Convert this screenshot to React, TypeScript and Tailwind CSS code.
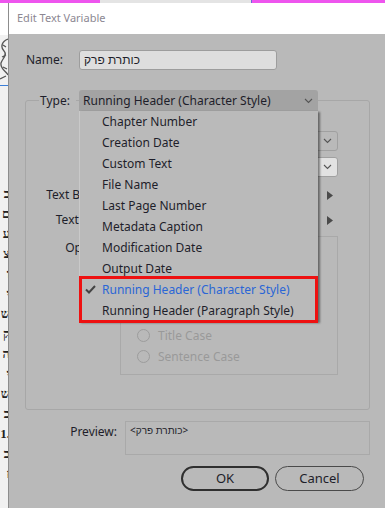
const items = [
  'Chapter Number',
  'Creation Date',
  'Custom Text',
  'File Name',
  'Last Page Number',
  'Metadata Caption',
  'Modification Date',
  'Output Date',
  'Running Header (Character Style)',
  'Running Header (Paragraph Style)',
]

const stripLetters = ['ב', 'ם', 'ע', 'צ', 'ו', 'י', 'ש', 'ק', 'ה', 'י', 'ש', 'כ', '1.', 'ב', 'ז']

function Chevron() {
  return (
    <svg width="9" height="6" viewBox="0 0 9 6" className="shrink-0">
      <polyline points="1,1 4.5,4.5 8,1" fill="none" stroke="#555" strokeWidth="1.1" />
    </svg>
  )
}

function Triangle() {
  return (
    <svg width="6" height="9" viewBox="0 0 6 9" className="shrink-0">
      <polygon points="0,0 6,4.5 0,9" fill="#4a4a4a" />
    </svg>
  )
}

function Radio({ label }: { label: string }) {
  return (
    <div className="flex h-[21px] items-center gap-[8px] pl-[16px]">
      <span className="h-[13px] w-[13px] rounded-full border border-[#9c9c9c]" />
      <span>{label}</span>
    </div>
  )
}

function Check({ label }: { label: string }) {
  return (
    <div className="flex h-[21px] items-center gap-[8px] pl-[16px]">
      <span className="h-[12px] w-[12px] rounded-[2px] border border-[#9c9c9c]" />
      <span>{label}</span>
    </div>
  )
}

function LeftStrip() {
  return (
    <div className="flex w-[8px] shrink-0 flex-col overflow-hidden bg-[#f1f1f1]">
      <div className="h-[32px] bg-white" />
      <svg width="8" height="50" viewBox="0 0 8 50">
        <path d="M8 4 C2 6 0 12 4 16 C8 20 2 24 1 28 C0 34 6 36 8 40 M3 10 l3 2 M2 22 l4 -2 M3 32 l4 2 M0 44 l6 -3" fill="none" stroke="#555" strokeWidth="1.3" />
      </svg>
      <div className="h-[1px] bg-[#3c7fd8]" />
      <div className="flex flex-col items-end pt-[98px] font-['Liberation_Serif',serif] text-[13px] font-bold leading-[20px] text-[#222]">
        {stripLetters.map((l, i) => (
          <span key={i} className="mr-[-2px]">{l}</span>
        ))}
      </div>
    </div>
  )
}

export default function App() {
  return (
    <div className="relative h-[508px] w-[385px] overflow-hidden bg-[#b9b9b9] font-['Noto_Sans','Noto_Sans_CJK_SC',sans-serif] text-[12px] text-[#1e1e2a]">
      <div className="flex h-full flex-col">
        <div className="flex h-[3px] shrink-0">
          <div className="w-[100px] bg-[#ee55ee]" />
          <div className="w-[151px] bg-[#e4e4e4]" />
          <div className="flex-1 border-l border-[#6b6bd8] bg-[#ee55ee]" />
        </div>
        <div className="flex flex-1">
          <LeftStrip />
          <div className="flex flex-1 flex-col border-l border-[#8d8d8d]">
            <div className="flex h-[31px] shrink-0 items-center bg-white pl-[8px] text-[11px] text-[#8c8792]">
              Edit Text Variable
            </div>

            <div className="flex-1 bg-[#b9b9b9] pl-[16px]">
              {/* name */}
              <div className="mt-[16px] flex h-[20px] items-center">
                <span className="w-[54px] pl-[1px]">Name:</span>
                <div className="flex h-[20px] w-[198px] items-center rounded-[3px] border border-[#9d9d9d] bg-[#dedede] pl-[4px]">
                  כותרת פרק
                </div>
              </div>

              {/* group box */}
              <div className="mt-[30px] h-[310px] w-[345px] rounded-[3px] border border-[#a7a7a7]">
                <div className="-mt-[11px] flex h-[21px] items-center">
                  <div className="w-[53px] pl-[13px]">
                    <span className="bg-[#b9b9b9] pl-[1px] pr-[6px]">Type:</span>
                  </div>
                  <div className="flex h-[21px] w-[239px] items-center justify-between rounded-t-[3px] bg-[#a3a3a3] pl-[4px] pr-[5px]">
                    <span>Running Header (Character Style)</span>
                    <Chevron />
                  </div>
                </div>

                <div className="mt-[20px] flex h-[20px]">
                  <span className="w-[87px] text-right">Style:</span>
                  <div className="ml-[5px] flex w-[220px] items-center justify-end rounded-[3px] border border-[#a0a0a0] pr-[5px]">
                    <Chevron />
                  </div>
                </div>

                <div className="mt-[6px] flex h-[20px]">
                  <span className="w-[87px] text-right">Use:</span>
                  <div className="ml-[5px] flex w-[220px] items-center justify-end rounded-[3px] border border-[#a0a0a0] bg-[#e2e2e2] pr-[5px]">
                    <Chevron />
                  </div>
                </div>

                <div className="mt-[8px] flex h-[20px] items-center">
                  <span className="w-[87px] text-right">Text Before:</span>
                  <div className="ml-[5px] h-[20px] w-[200px] border border-dashed border-[#a5a5a5]" />
                  <div className="ml-[9px]">
                    <Triangle />
                  </div>
                </div>

                <div className="mt-[5px] flex h-[20px] items-center">
                  <span className="w-[87px] text-right">Text After:</span>
                  <div className="ml-[5px] h-[20px] w-[200px] border border-dashed border-[#a5a5a5]" />
                  <div className="ml-[9px]">
                    <Triangle />
                  </div>
                </div>

                <div className="mt-[6px] flex">
                  <span className="w-[87px] pt-[3px] text-right">Options:</span>
                  <div className="ml-[7px] h-[139px] w-[218px] border border-[#a9a9a9] pt-[4px] text-[#999999]">
                    <Check label="Delete End Punctuation" />
                    <Check label="Change Case" />
                    <Radio label="Upper Case" />
                    <Radio label="Lower Case" />
                    <Radio label="Title Case" />
                    <Radio label="Sentence Case" />
                  </div>
                </div>
              </div>

              {/* preview */}
              <div className="mt-[11px] flex">
                <span className="w-[92px] pt-[2px] text-right">Preview:</span>
                <div className="ml-[8px] h-[34px] w-[245px] border border-[#a9a9a9] pl-[4px] pt-[1px] text-[10px]">
                  &lt;כותרת פרק&gt;
                </div>
              </div>

              {/* buttons */}
              <div className="mt-[11px] flex gap-[6px] pl-[156px]">
                <button className="h-[25px] w-[88px] rounded-full border-2 border-[#2f2f2f] text-[13px]">OK</button>
                <button className="h-[25px] w-[89px] rounded-full border border-[#4a4a4a] text-[13px]">Cancel</button>
              </div>
            </div>
          </div>
        </div>
      </div>

      {/* open dropdown */}
      <div className="absolute left-[79px] top-[111px] h-[211px] w-[239px] border-l border-[#c9c9c9] bg-[#bababa] shadow-[2px_1px_2px_rgba(0,0,0,0.45)]">
        {items.map((it, i) => (
          <div
            key={it}
            className={`relative flex h-[21px] items-center pl-[22px] ${i === 8 ? 'text-[#2a66d6]' : ''}`}
          >
            {i === 8 && (
              <svg width="11" height="9" viewBox="0 0 11 9" className="absolute left-[5px] top-[6px]">
                <path d="M1 4.5 L4 7.5 L10 1" fill="none" stroke="#444" strokeWidth="2" />
              </svg>
            )}
            {it}
          </div>
        ))}
      </div>

      {/* highlight */}
      <div className="absolute left-[79px] top-[276px] h-[47px] w-[239px] border-[3px] border-[#ee1111]" />
    </div>
  )
}
